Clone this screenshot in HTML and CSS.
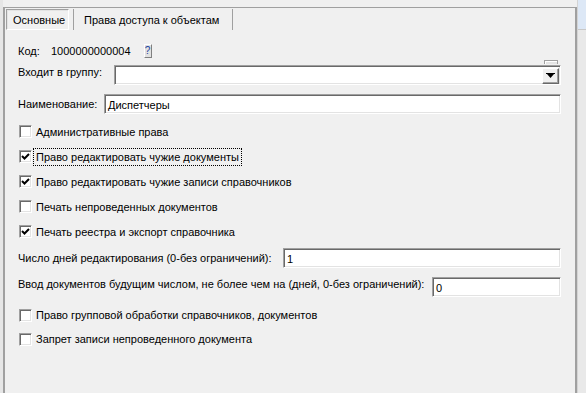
FILE: index.html
```html
<!DOCTYPE html>
<html>
<head>
<meta charset="utf-8">
<link rel="stylesheet" href="styles.css">
</head>
<body>
<div class="edge"></div>
<div class="panel">
  <div class="tabs">
    <div class="tab active">Основные</div>
    <div class="tab">Права доступа к объектам</div>
  </div>
  <div class="form">
    <div class="row row-kod">
      <span class="lbl-kod">Код:</span>
      <span class="kod-val">1000000000004</span>
      <span class="qbtn">?</span>
    </div>
    <div class="row row-group">
      <span class="lbl lbl-group">Входит в группу:</span>
      <div class="field combo">
        <span class="combo-tab"></span>
        <span class="drop"><svg width="9" height="6" viewBox="0 0 9 6"><rect x="0" y="0" width="9" height="1" fill="#000"/><polygon points="1,1 8,1 4.5,5" fill="#000"/></svg></span>
      </div>
    </div>
    <div class="row row-name">
      <span class="lbl lbl-name">Наименование:</span>
      <div class="field">Диспетчеры</div>
    </div>
    <div class="checks">
      <div class="cb"><span class="box"></span><span class="cbl">Административные права</span></div>
      <div class="cb"><span class="box on"><svg width="9" height="9" viewBox="0 0 9 9"><path d="M1 4 L3.5 6.5 L8 2" fill="none" stroke="#000" stroke-width="2"/></svg></span><span class="cbl focus">Право редактировать чужие документы</span></div>
      <div class="cb"><span class="box on"><svg width="9" height="9" viewBox="0 0 9 9"><path d="M1 4 L3.5 6.5 L8 2" fill="none" stroke="#000" stroke-width="2"/></svg></span><span class="cbl">Право редактировать чужие записи справочников</span></div>
      <div class="cb"><span class="box"></span><span class="cbl">Печать непроведенных документов</span></div>
      <div class="cb"><span class="box on"><svg width="9" height="9" viewBox="0 0 9 9"><path d="M1 4 L3.5 6.5 L8 2" fill="none" stroke="#000" stroke-width="2"/></svg></span><span class="cbl">Печать реестра и экспорт справочника</span></div>
    </div>
    <div class="row row-days">
      <span class="lbl lbl-days">Число дней редактирования (0-без ограничений):</span>
      <div class="field">1</div>
    </div>
    <div class="row row-future">
      <span class="lbl lbl-future">Ввод документов будущим числом, не более чем на (дней, 0-без ограничений):</span>
      <div class="field">0</div>
    </div>
    <div class="checks checks2">
      <div class="cb cb2"><span class="box"></span><span class="cbl">Право групповой обработки справочников, документов</span></div>
      <div class="cb cb2"><span class="box"></span><span class="cbl">Запрет записи непроведенного документа</span></div>
    </div>
  </div>
</div>
<div class="side">
  <div class="side-top"></div>
  <div class="side-bottom"></div>
</div>
</body>
</html>
```
FILE: styles.css
```css
html, body {
  margin: 0;
  padding: 0;
}
body {
  width: 586px;
  height: 393px;
  overflow: hidden;
  background: #f0f0f0;
  display: flex;
  font-family: "Liberation Sans", Arial, sans-serif;
  font-size: 11px;
  line-height: 14px;
  color: #000;
}
.edge {
  width: 3px;
  background: #e6e6e6;
  flex: none;
}
.panel {
  width: 570px;
  margin-top: 7px;
  border-left: 2px solid #a0a0a0;
  border-top: 1px solid #a0a0a0;
  border-right: 2px solid #a0a0a0;
  flex: none;
  display: flex;
  flex-direction: column;
}
.side {
  flex: 1;
  border-left: 1px solid #d4d4d4;
  display: flex;
  flex-direction: column;
}
.side-top {
  height: 29px;
  background: #dde8f6;
  border-bottom: 1px solid #c8c8c8;
}
.side-bottom {
  flex: 1;
  background: #e9e9e9;
}
.tabs {
  height: 22px;
  display: flex;
  align-items: flex-start;
}
.tab {
  height: 21px;
  display: flex;
  align-items: center;
  box-sizing: border-box;
}
.tab.active {
  margin-top: 1px;
  margin-left: 1px;
  width: 63px;
  padding-left: 6px;
  border-top: 1px solid #a0a0a0;
  border-left: 1px solid #a0a0a0;
  border-right: 1px solid #ffffff;
  border-bottom: 1px solid #ffffff;
  box-shadow: inset 1px 1px 0 #e3e3e3;
}
.tab:not(.active) {
  margin-top: 1px;
  margin-left: 4px;
  width: 160px;
  padding-left: 10px;
  border-left: 1px solid #a0a0a0;
  border-right: 1px solid #a0a0a0;
}
.form {
  padding: 0 14px 0 13px;
  display: flex;
  flex-direction: column;
}
.row {
  display: flex;
  align-items: center;
}
.row-kod {
  margin-top: 11px;
  height: 20px;
}
.lbl-kod {
  width: 33px;
}
.qbtn {
  margin-left: 13px;
  width: 6px;
  height: 12px;
  background: #e1e1e1;
  border-right: 1px solid #808080;
  border-bottom: 1px solid #808080;
  border-top: 1px solid #ffffff;
  border-left: 1px solid #ffffff;
  font-size: 10px;
  line-height: 12px;
  color: #1a3fa0;
  text-align: center;
  overflow: visible;
  display: flex;
  justify-content: center;
}
.lbl {
  flex: none;
}
.lbl-group { width: 96px; }
.lbl-name { width: 86px; }
.lbl-days { width: 265px; }
.lbl-future { width: 414px; }
.field {
  flex: 1;
  height: 20px;
  box-sizing: border-box;
  background: #fff;
  border-top: 1px solid #a0a0a0;
  border-left: 1px solid #a0a0a0;
  border-right: 1px solid #ffffff;
  border-bottom: 1px solid #ffffff;
  box-shadow: inset 1px 1px 0 #696969, inset -1px -1px 0 #e3e3e3;
  padding: 3px 0 0 3px;
  line-height: 14px;
}
.row-group {
  margin-top: 4px;
  height: 20px;
  align-items: flex-start;
}
.combo {
  position: relative;
  display: flex;
  justify-content: flex-end;
  padding: 2px 1px 1px 0;
}
.combo-tab {
  position: absolute;
  top: -6px;
  right: 2px;
  width: 12px;
  height: 3px;
  background: #e4e4e4;
  border: 1px solid #a0a0a0;
  border-bottom: none;
  box-shadow: inset 1px 1px 0 #ffffff;
}
.drop {
  width: 17px;
  height: 16px;
  box-sizing: border-box;
  background: #f0f0f0;
  border-top: 1px solid #ffffff;
  border-left: 1px solid #ffffff;
  border-right: 1px solid #696969;
  border-bottom: 1px solid #696969;
  box-shadow: inset -1px -1px 0 #a0a0a0;
  display: flex;
  align-items: center;
  justify-content: center;
}
.row-name {
  margin-top: 9px;
  height: 20px;
}
.checks {
  margin-top: 5px;
  display: flex;
  flex-direction: column;
}
.cb {
  height: 25px;
  display: flex;
  align-items: center;
}
.box {
  width: 13px;
  height: 13px;
  box-sizing: border-box;
  flex: none;
  margin-left: 1px;
  background: #fff;
  border-top: 1px solid #a0a0a0;
  border-left: 1px solid #a0a0a0;
  border-right: 1px solid #ffffff;
  border-bottom: 1px solid #ffffff;
  box-shadow: inset 1px 1px 0 #696969, inset -1px -1px 0 #e3e3e3;
  display: flex;
  align-items: center;
  justify-content: center;
}
.cbl {
  margin-left: 1px;
  padding: 1px 2px;
  border: 1px dotted transparent;
}
.cbl.focus {
  border-color: #000;
}
.row-days {
  margin-top: 4px;
  height: 20px;
}
.row-future {
  margin-top: 9px;
  height: 20px;
  align-items: flex-start;
}
.checks2 {
  margin-top: 6px;
}
.cb2 {
  height: 24px;
}
```
